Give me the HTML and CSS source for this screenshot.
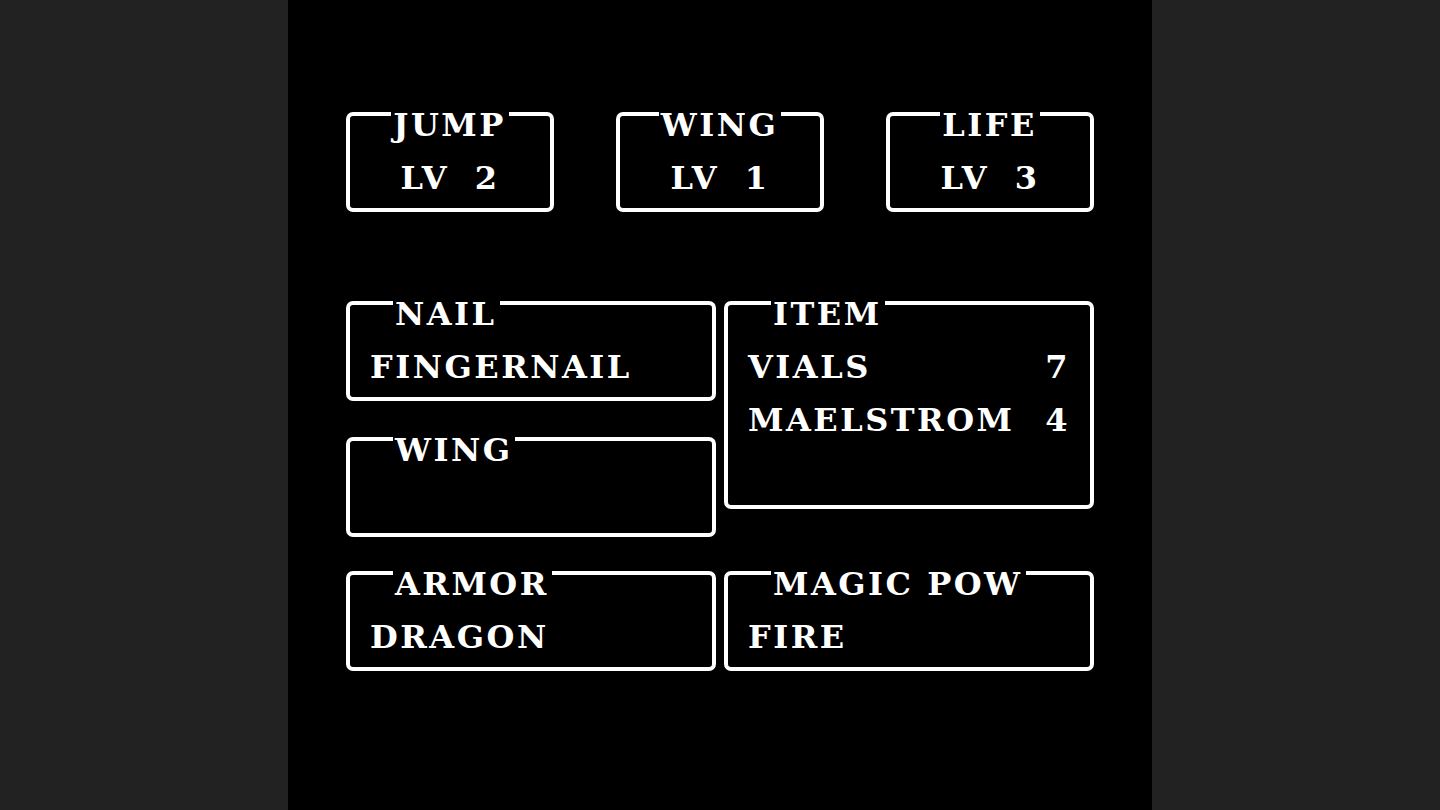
FILE: index.html
```html
<!doctype html>
<html>
  <head>
    <title>Status</title>
    <link rel="stylesheet" href="styles.css">
  </head>
  <body>
    <div class="screen">

      <!-- niveis -->
      <div class="stats">
        <div class="box">
          <div class="box-title centered">JUMP</div>
          <div class="box-body level">LV 2</div>
        </div>
        <div class="box">
          <div class="box-title centered">WING</div>
          <div class="box-body level">LV 1</div>
        </div>
        <div class="box">
          <div class="box-title centered">LIFE</div>
          <div class="box-body level">LV 3</div>
        </div>
      </div>

      <!-- equipamento -->
      <div class="gear">
        <div class="gear-col">
          <div class="box">
            <div class="box-title">NAIL</div>
            <div class="box-body">FINGERNAIL</div>
          </div>
          <div class="box">
            <div class="box-title">WING</div>
            <div class="box-body"></div>
          </div>
        </div>
        <div class="gear-col">
          <div class="box box-tall">
            <div class="box-title">ITEM</div>
            <div class="box-body items">
              <div class="item-row"><span>VIALS</span><span>7</span></div>
              <div class="item-row"><span>MAELSTROM</span><span>4</span></div>
            </div>
          </div>
        </div>
      </div>

      <div class="gear gear-bottom">
        <div class="box">
          <div class="box-title">ARMOR</div>
          <div class="box-body">DRAGON</div>
        </div>
        <div class="box">
          <div class="box-title">MAGIC POW</div>
          <div class="box-body">FIRE</div>
        </div>
      </div>

    </div>
  </body>
</html>
```

FILE: styles.css
```css
/* Estilos gerais */
body {
  margin: 0;
  padding: 0;
  background-color: #222;
  font-family: "DejaVu Serif", serif;
  font-weight: bold;
  font-size: 32px;
  color: #fff;
}

/* Tela preta do jogo */
.screen {
  box-sizing: border-box;
  width: 864px;
  height: 810px;
  margin: 0 auto;
  padding: 112px 58px 0;
  background-color: #000;
}

/* Caixas com titulo na borda */
.box {
  box-sizing: border-box;
  width: 370px;
  height: 100px;
  padding: 0 20px;
  border: 4px solid #fff;
  border-radius: 7px;
}

.box-tall {
  height: 208px;
}

.box-title {
  width: fit-content;
  margin: -7px 0 0 23px;
  padding: 0 3px 0 2px;
  background-color: #000;
  line-height: 32px;
  letter-spacing: 2.5px;
  white-space: pre;
}

.box-title.centered {
  margin-left: auto;
  margin-right: auto;
}

.box-body {
  padding-top: 21px;
  line-height: 32px;
  letter-spacing: 2.5px;
}

/* Niveis */
.stats {
  display: flex;
  gap: 62px;
}

.stats .box {
  width: 208px;
}

.level {
  text-align: center;
  word-spacing: 12px;
}

/* Equipamento */
.gear {
  display: flex;
  align-items: flex-start;
  gap: 8px;
  margin-top: 89px;
}

.gear-col {
  display: flex;
  flex-direction: column;
  gap: 36px;
}

.gear-bottom {
  margin-top: 34px;
}

.items {
  display: flex;
  flex-direction: column;
  gap: 21px;
}

.item-row {
  display: flex;
  justify-content: space-between;
}
```
